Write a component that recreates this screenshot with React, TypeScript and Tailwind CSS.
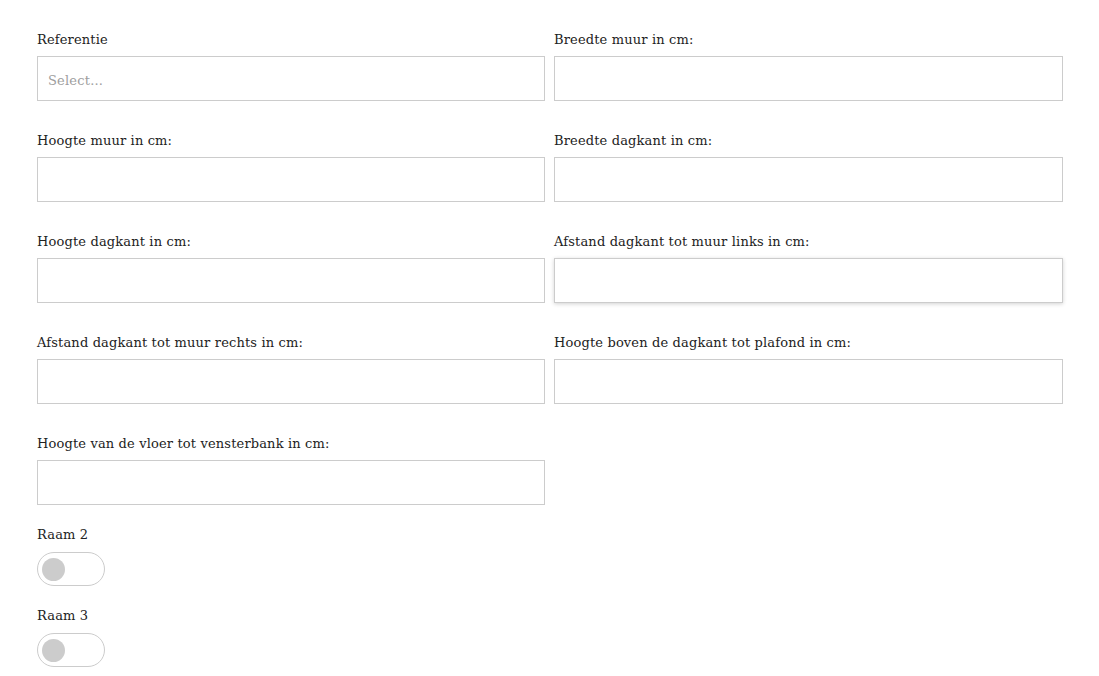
import React from "react";

const Field = ({ label, placeholder, focused }: { label: string; placeholder?: string; focused?: boolean }) => (
  <div className="flex flex-col">
    <label className="block text-[13px] leading-[17px] mb-[8px] text-[#222] tracking-[0.15px]">{label}</label>
    <div
      className={
        "h-[45px] w-full border border-[#cccccc] bg-white flex items-center pl-[10px] pt-[5px] " +
        (focused ? "shadow-[0_1px_4px_rgba(0,0,0,0.18)]" : "")
      }
    >
      {placeholder ? <span className="text-[13px] text-[#9e9e9e] font-normal tracking-[0.2px]">{placeholder}</span> : null}
    </div>
  </div>
);

const Toggle = ({ label }: { label: string }) => (
  <div className="flex flex-col">
    <label className="block text-[13px] leading-[17px] mb-[9px] text-[#222] tracking-[0.15px]">{label}</label>
    <div className="w-[68px] h-[34px] rounded-full border border-[#cccccc] bg-white flex items-center pl-[4px]">
      <div className="w-[23px] h-[23px] rounded-full bg-[#cccccc]" />
    </div>
  </div>
);

export default function App() {
  return (
    <div
      className="bg-white min-h-[676px] pl-[37px] pr-[36px] pt-[31px]"
      style={{ fontFamily: '"DejaVu Serif", "Liberation Serif", serif' }}
    >
      <div className="grid grid-cols-[508px_509px] gap-x-[9px] gap-y-[31px]">
        <Field label="Referentie" placeholder="Select..." />
        <Field label="Breedte muur in cm:" />
        <Field label="Hoogte muur in cm:" />
        <Field label="Breedte dagkant in cm:" />
        <Field label="Hoogte dagkant in cm:" />
        <Field label="Afstand dagkant tot muur links in cm:" focused />
        <Field label="Afstand dagkant tot muur rechts in cm:" />
        <Field label="Hoogte boven de dagkant tot plafond in cm:" />
        <Field label="Hoogte van de vloer tot vensterbank in cm:" />
      </div>
      <div className="mt-[21px] flex flex-col gap-[21px]">
        <Toggle label="Raam 2" />
        <Toggle label="Raam 3" />
      </div>
    </div>
  );
}
